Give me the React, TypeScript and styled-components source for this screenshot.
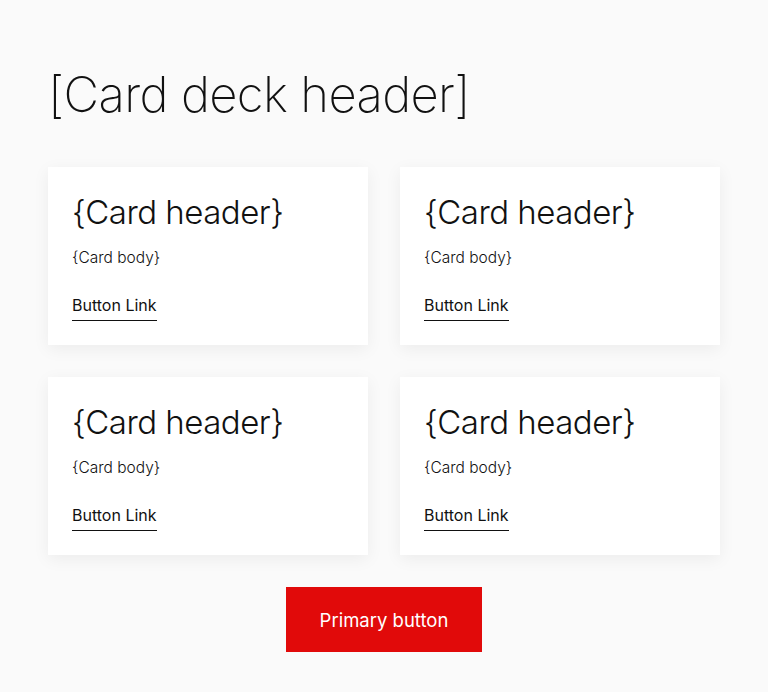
import React from "react";
import styled, { createGlobalStyle } from "styled-components";

const GlobalStyle = createGlobalStyle`
  html, body {
    margin: 0;
    padding: 0;
    background: #fafafa;
    font-family: Inter, "Noto Sans", sans-serif;
    color: #111;
  }
`;

const Page = styled.main`
  padding: 65px 48px 40px;
  display: flex;
  flex-direction: column;
`;

const DeckHeader = styled.h1`
  margin: 0 0 42px 0;
  font-size: 49px;
  font-weight: 200;
  letter-spacing: -0.65px;
  line-height: 60px;
`;

const Grid = styled.div`
  display: grid;
  grid-template-columns: repeat(2, 320px);
  gap: 32px;
`;

const Card = styled.div`
  background: #fff;
  height: 178px;
  box-sizing: border-box;
  padding: 25px 24px 0;
  box-shadow: 0 4px 16px rgba(0, 0, 0, 0.06);
  display: flex;
  flex-direction: column;
  align-items: flex-start;
`;

const CardHeader = styled.h2`
  margin: 0;
  font-size: 33px;
  font-weight: 300;
  letter-spacing: -0.5px;
  line-height: 40px;
`;

const CardBody = styled.p`
  margin: 16px 0 0;
  font-size: 15.5px;
  font-weight: 300;
  line-height: 20px;
`;

const LinkButton = styled.a`
  margin-top: 27px;
  font-size: 16px;
  font-weight: 400;
  color: #111;
  text-decoration: none;
  padding-bottom: 5px;
  border-bottom: 1px solid #111;
  line-height: 20px;
  cursor: pointer;
`;

const Actions = styled.div`
  display: flex;
  justify-content: center;
  margin-top: 32px;
`;

const PrimaryButton = styled.button`
  width: 196px;
  height: 65px;
  background: #e10a0a;
  color: #fff;
  border: none;
  font-family: inherit;
  font-size: 18.5px;
  font-weight: 400;
  cursor: pointer;
`;

const cards = [0, 1, 2, 3];

export default function App() {
  return (
    <>
      <GlobalStyle />
      <Page>
        <DeckHeader>[Card deck header]</DeckHeader>
        <Grid>
          {cards.map((i) => (
            <Card key={i}>
              <CardHeader>{"{Card header}"}</CardHeader>
              <CardBody>{"{Card body}"}</CardBody>
              <LinkButton>Button Link</LinkButton>
            </Card>
          ))}
        </Grid>
        <Actions>
          <PrimaryButton>Primary button</PrimaryButton>
        </Actions>
      </Page>
    </>
  );
}
